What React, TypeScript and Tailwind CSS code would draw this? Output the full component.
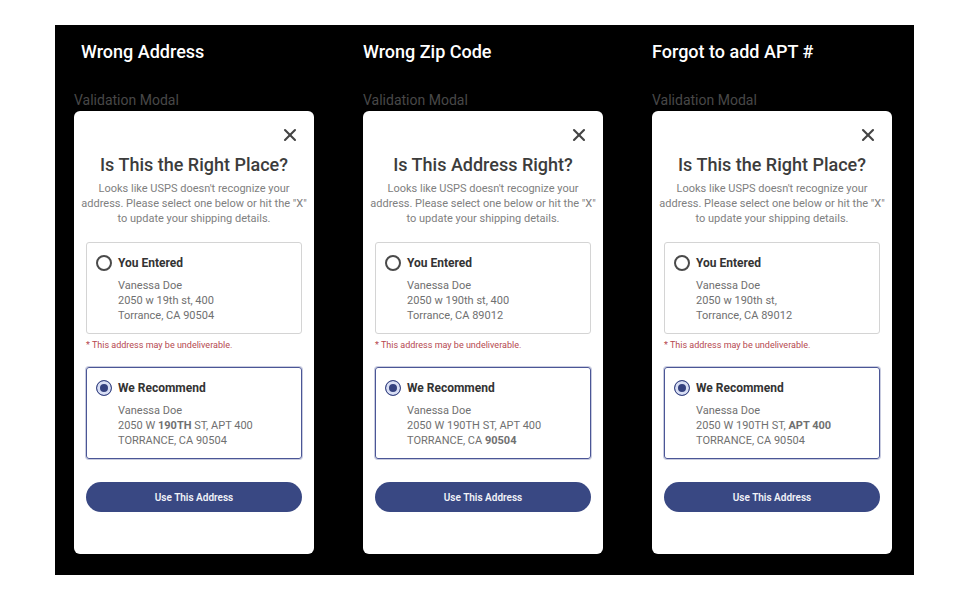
import { useState } from "react";
import type { ReactNode } from "react";
import { X } from "lucide-react";

type Scenario = {
    id: string;
    label: string;
    heading: string;
    entered: string[];
    recommended: ReactNode[];
};

const scenarios: Scenario[] = [
    {
        id: "address",
        label: "Wrong Address",
        heading: "Is This the Right Place?",
        entered: ["Vanessa Doe", "2050 w 19th st, 400", "Torrance, CA 90504"],
        recommended: [
            "Vanessa Doe",
            <>2050 W <b className="font-bold">190TH</b> ST, APT 400</>,
            "TORRANCE, CA 90504",
        ],
    },
    {
        id: "zip",
        label: "Wrong Zip Code",
        heading: "Is This Address Right?",
        entered: ["Vanessa Doe", "2050 w 190th st, 400", "Torrance, CA 89012"],
        recommended: [
            "Vanessa Doe",
            "2050 W 190TH ST, APT 400",
            <>TORRANCE, CA <b className="font-bold">90504</b></>,
        ],
    },
    {
        id: "apt",
        label: "Forgot to add APT #",
        heading: "Is This the Right Place?",
        entered: ["Vanessa Doe", "2050 w 190th st,", "Torrance, CA 89012"],
        recommended: [
            "Vanessa Doe",
            <>2050 W 190TH ST, <b className="font-bold">APT 400</b></>,
            "TORRANCE, CA 90504",
        ],
    },
];

type OptionProps = {
    name: string;
    title: string;
    lines: ReactNode[];
    checked: boolean;
    onSelect: () => void;
};

function AddressOption({ name, title, lines, checked, onSelect }: OptionProps) {
    return (
        <label
            className={`flex gap-[6px] rounded-[3px] border px-[9px] pt-3 pb-[10px] ${
                checked ? "border-[#4b5696] ring-1 ring-[#4b5696]/30" : "border-[#d4d4d4]"
            }`}
        >
            <input
                type="radio"
                name={name}
                checked={checked}
                onChange={onSelect}
                className="size-4 shrink-0 appearance-none rounded-full border-2 border-[#4a4a4a] bg-white checked:border checked:border-[#3b4886] checked:bg-[#34417f] checked:shadow-[inset_0_0_0_3px_#d8def4]"
            />
            <span>
                <span className="block text-xs leading-4 font-bold text-[#333]">{title}</span>
                <span className="mt-[7px] block text-[11px] leading-[15px] text-[#707070]">
                    {lines.map((line, index) => (
                        <span key={index} className="block">{line}</span>
                    ))}
                </span>
            </span>
        </label>
    );
}

function ValidationModal({ scenario }: { scenario: Scenario }) {
    const [choice, setChoice] = useState("recommended");

    return (
        <div className="rounded-md bg-white px-3 pt-[14px] pb-[42px]">
            <div className="flex justify-end pr-[2px]">
                <button type="button" aria-label="Close" className="text-[#444]">
                    <X className="size-5" strokeWidth={2.5} />
                </button>
            </div>
            <h3 className="mt-2 text-center text-lg leading-6 font-medium text-[#3c3c3c]">
                {scenario.heading}
            </h3>
            <p className="-mx-2 mt-1 text-center text-[11px] leading-[15px] text-[#808080]">
                Looks like USPS doesn't recognize your
                <br />
                address. Please select one below or hit the "X"
                <br />
                to update your shipping details.
            </p>
            <div className="mt-4">
                <AddressOption
                    name={scenario.id}
                    title="You Entered"
                    lines={scenario.entered}
                    checked={choice === "entered"}
                    onSelect={() => setChoice("entered")}
                />
            </div>
            <p className="mt-1 text-[9px] leading-[14px] text-[#b5484f]">
                * This address may be undeliverable.
            </p>
            <div className="mt-[15px]">
                <AddressOption
                    name={scenario.id}
                    title="We Recommend"
                    lines={scenario.recommended}
                    checked={choice === "recommended"}
                    onSelect={() => setChoice("recommended")}
                />
            </div>
            <button
                type="button"
                className="mt-[23px] block h-[30px] w-full rounded-full bg-[#394883] text-[10px] font-semibold text-[#f1f2f8]"
            >
                Use This Address
            </button>
        </div>
    );
}

export default function App() {
    return (
        <div className="bg-white py-[25px] pr-[56px] pl-[55px] font-['Roboto','Liberation_Sans',sans-serif]">
            <main className="grid grid-cols-3 gap-[49px] bg-black pt-[15px] pr-[22px] pb-[21px] pl-[19px]">
                {scenarios.map((scenario) => (
                    <section key={scenario.id} className="group">
                        <h2 className="text-lg leading-6 font-medium whitespace-nowrap text-white group-first:pl-[7px]">
                            {scenario.label}
                        </h2>
                        <p className="mt-7 mb-[3px] text-sm leading-4 text-[#484848]">Validation Modal</p>
                        <ValidationModal scenario={scenario} />
                    </section>
                ))}
            </main>
        </div>
    );
}
